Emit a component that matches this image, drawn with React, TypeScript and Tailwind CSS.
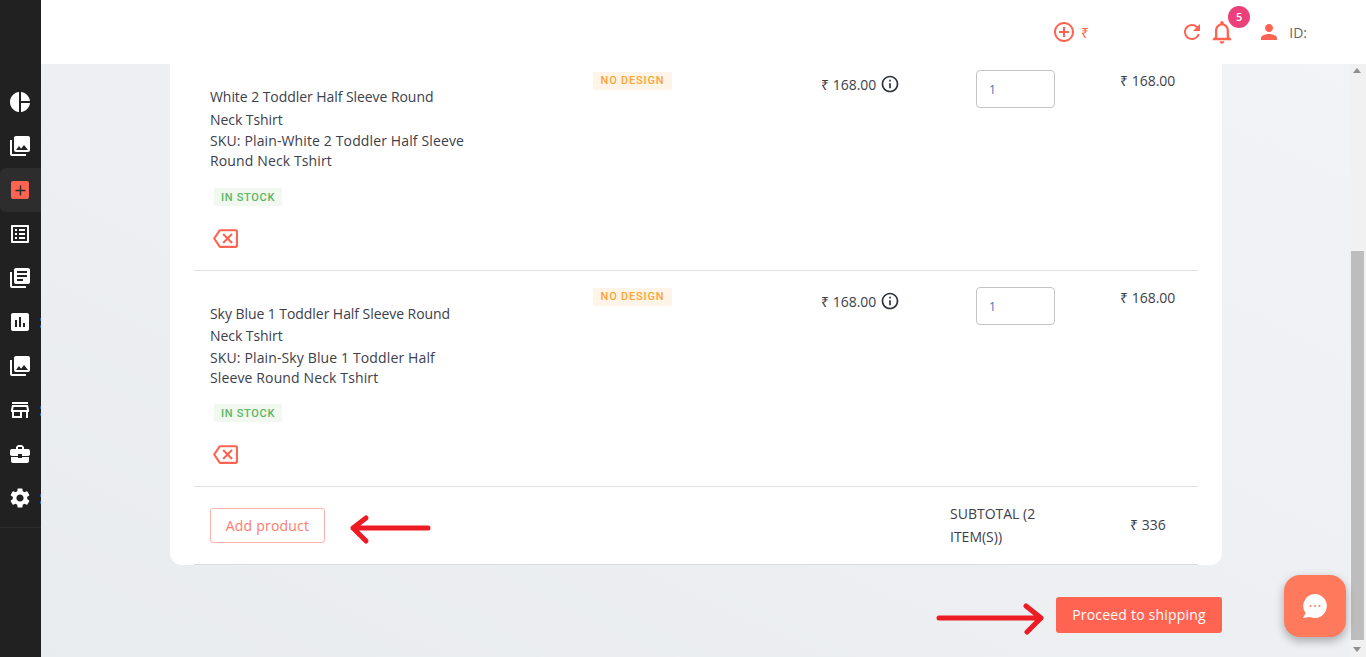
import {
  MdAdd,
  MdAddCircleOutline,
  MdAssessment,
  MdBusinessCenter,
  MdInfoOutline,
  MdLibraryBooks,
  MdListAlt,
  MdOutlineBackspace,
  MdOutlineNotifications,
  MdOutlineStore,
  MdPerson,
  MdPhotoLibrary,
  MdPieChart,
  MdRefresh,
  MdSettings,
} from "react-icons/md";

const sidebarItems = [
  { icon: MdPieChart },
  { icon: MdPhotoLibrary },
  { icon: MdAdd, active: true },
  { icon: MdListAlt },
  { icon: MdLibraryBooks },
  { icon: MdAssessment, dot: true },
  { icon: MdPhotoLibrary },
  { icon: MdOutlineStore, dot: true },
  { icon: MdBusinessCenter },
  { icon: MdSettings, dot: true },
];

const products = [
  {
    title: "White 2 Toddler Half Sleeve Round Neck Tshirt",
    sku: "SKU: Plain-White 2 Toddler Half Sleeve Round Neck Tshirt",
    rowClass: "pt-[7px] pb-[19px]",
    titleClass: "leading-[22.5px]",
    skuClass: "",
    badgeClass: "mt-[1px]",
    stockClass: "mt-[17px]",
  },
  {
    title: "Sky Blue 1 Toddler Half Sleeve Round Neck Tshirt",
    sku: "SKU: Plain-Sky Blue 1 Toddler Half Sleeve Round Neck Tshirt",
    rowClass: "pt-[17px] pb-[19px]",
    titleClass: "leading-[22px]",
    skuClass: "mt-[1px]",
    badgeClass: "",
    stockClass: "mt-[16px]",
  },
];

const Sidebar = () => (
  <div className="w-[41px] shrink-0 bg-[#212121] pt-[80px]">
    {sidebarItems.map((item, i) => (
      <div
        key={i}
        className={
          item.active
            ? "relative flex h-[44px] items-center justify-center rounded-l-md bg-[#2d2d2d] pr-[1px]"
            : "relative flex h-[44px] items-center justify-center pr-[1px]"
        }
      >
        {item.active ? (
          <span className="flex h-[18px] w-[18px] items-center justify-center rounded-[2px] bg-[#ff6452] text-[#2b2b2b]">
            <item.icon size={17} />
          </span>
        ) : (
          <item.icon size={24} className="text-white" />
        )}
        {item.dot && (
          <span className="absolute right-0 top-[18px] h-[10px] w-[1px] border-y-[3px] border-[#2a5bd7]" />
        )}
      </div>
    ))}
    <div className="mt-[7px] border-t border-[#2d2d2d]" />
  </div>
);

const Header = () => (
  <div className="flex h-[64px] shrink-0 items-center justify-end bg-white pr-[59px] text-[14px] text-[#666]">
    <MdAddCircleOutline size={24} className="text-[#ff6452]" />
    <span className="ml-[5px] w-[99px] text-[14px] text-[#ff6452]">₹</span>
    <MdRefresh size={24} className="text-[#ff6452]" />
    <span className="relative ml-[4px]">
      <MdOutlineNotifications size={28} className="text-[#ff6452]" />
      <span className="absolute -right-[14px] -top-[12px] flex h-[22px] w-[22px] items-center justify-center rounded-full bg-[#ec407a] text-[11px] font-semibold text-white">
        5
      </span>
    </span>
    <MdPerson size={24} className="ml-[21px] text-[#ff6452]" />
    <span className="ml-[8px]">ID:</span>
  </div>
);

const ProductRow = ({ product }: { product: (typeof products)[number] }) => (
  <div
    className={`grid grid-cols-[399px_228px_155px_145px_77px] border-b border-[#e2e2e2] ${product.rowClass}`}
  >
    <div className="pl-[16px]">
      <p className={`mt-[15px] w-[250px] text-[14px] tracking-[-0.06px] ${product.titleClass}`}>
        {product.title}
      </p>
      <p className={`w-[262px] text-[14px] leading-[20px] tracking-[0.13px] ${product.skuClass}`}>
        {product.sku}
      </p>
      <span
        className={`ml-[4px] flex h-[18px] w-[68px] items-center justify-center rounded-[2px] bg-[#f0f8f0] pt-[2px] font-['Roboto',sans-serif] text-[11px] font-medium tracking-[0.7px] text-[#5cb660] ${product.stockClass}`}
      >
        IN STOCK
      </span>
      <MdOutlineBackspace size={25} className="ml-[3px] mt-[20px] text-[#ff6452]" />
    </div>
    <div>
      <span
        className={`flex h-[18px] w-[79px] items-center justify-center rounded-[2px] bg-[#fff4e8] font-['Roboto',sans-serif] text-[11px] font-medium tracking-[0.8px] text-[#ffa133] ${product.badgeClass}`}
      >
        NO DESIGN
      </span>
    </div>
    <div className="mt-[3px] flex h-[20px] items-center text-[14px]">
      ₹ 168.00
      <MdInfoOutline size={20} className="ml-[4px] text-[#2c3038]" />
    </div>
    <div>
      <div className="-mt-[1px] flex h-[38px] w-[79px] items-center rounded-[4px] border border-[#c4c4c4] pl-[12px] pt-[1px] text-[12px] text-[#3a78c2]">
        1
      </div>
    </div>
    <div className="-ml-[1px] text-[14px] leading-[20px]">₹ 168.00</div>
  </div>
);

export default function App() {
  return (
    <div className="relative flex h-[657px] w-[1366px] overflow-hidden bg-linear-to-tr from-[#e9ecef] to-[#f2f4f8] font-['Open_Sans',sans-serif] text-[#3c404b]">
      <Sidebar />
      <div className="flex min-w-0 flex-1 flex-col">
        <Header />
        <div className="flex min-h-0 flex-1">
          <div className="min-w-0 flex-1 pl-[129px] pr-[127px]">
            <div className="h-[501px] rounded-b-xl bg-white px-[24px]">
              {products.map((product) => (
                <ProductRow key={product.sku} product={product} />
              ))}
              <div className="grid h-[78px] grid-cols-[756px_180px_68px] items-center border-b border-[#dcdcdc] text-[14px]">
                <div className="pl-[16px]">
                  <button className="mb-[1px] h-[35px] w-[115px] rounded-[3px] border border-[#ffb3aa] text-[14px] tracking-[0.2px] text-[#ff7b6c]">
                    Add product
                  </button>
                </div>
                <p className="mb-[2px] w-[110px] leading-[23px]">SUBTOTAL (2 ITEM(S))</p>
                <p className="mb-[2px]">₹ 336</p>
              </div>
            </div>
            <div className="mt-[32px] flex justify-end">
              <button className="h-[36px] w-[166px] rounded-[3px] bg-[#ff6452] pb-[2px] text-[14px] tracking-[0.2px] text-white">
                Proceed to shipping
              </button>
            </div>
          </div>
          <div className="relative w-[17px] shrink-0 bg-[#f1f1f1]">
            <div className="ml-[2px] mt-[187px] h-[389px] w-[13px] bg-[#bdbdbd]" />
            <span className="absolute bottom-[5px] left-[4px] h-0 w-0 border-x-[4px] border-t-[5px] border-x-transparent border-t-[#8f8f8f]" />
            <span className="absolute left-[4px] top-[4px] h-0 w-0 border-x-[4px] border-b-[5px] border-x-transparent border-b-[#8f8f8f]" />
          </div>
        </div>
      </div>

      <div className="absolute left-[1284px] top-[575px] flex h-[62px] w-[62px] items-center justify-center rounded-[16px] bg-[#ff7a5c] shadow-[0_4px_10px_rgba(0,0,0,0.3)]">
        <svg width="26" height="26" viewBox="0 0 26 26">
          <path d="M13 1a12 12 0 1 1-5 23L1 25l2.600-5A12 12 0 0 1 13 1z" fill="#fff" />
          <circle cx="8.500" cy="13" r="1" fill="#ff7a5c" />
          <circle cx="13" cy="13" r="1" fill="#ff7a5c" />
          <circle cx="17.500" cy="13" r="1" fill="#ff7a5c" />
        </svg>
      </div>

      <svg className="absolute left-[345px] top-[510px]" width="92" height="36" viewBox="0 0 92 36">
        <path d="M83 18H8M21 8L8 18l13 13" fill="none" stroke="#ed1c24" strokeWidth="5" strokeLinecap="round" strokeLinejoin="round" />
      </svg>
      <svg className="absolute left-[932px] top-[600px]" width="116" height="36" viewBox="0 0 116 36">
        <path d="M7 18h102M94 6l15 12-14 14" fill="none" stroke="#ed1c24" strokeWidth="5" strokeLinecap="round" strokeLinejoin="round" />
      </svg>
    </div>
  );
}
